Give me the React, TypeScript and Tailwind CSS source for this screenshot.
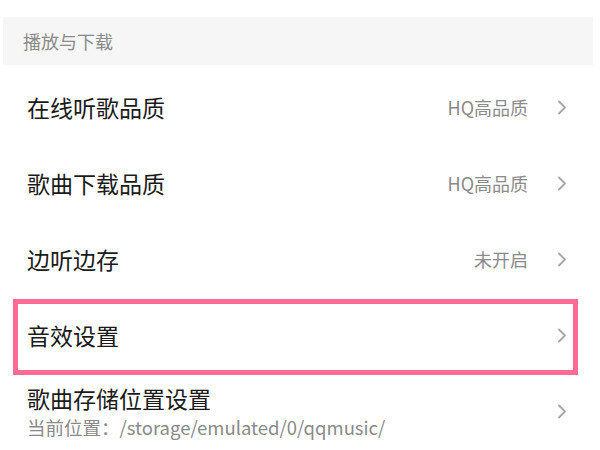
type Row = {
  title: string;
  value?: string;
  sub?: string;
  highlight?: boolean;
};

const rows: Row[] = [
  { title: "在线听歌品质", value: "HQ高品质" },
  { title: "歌曲下载品质", value: "HQ高品质" },
  { title: "边听边存", value: "未开启" },
  { title: "音效设置", highlight: true },
  { title: "歌曲存储位置设置", sub: "当前位置：/storage/emulated/0/qqmusic/" },
];

const font = { fontFamily: '"Noto Sans CJK SC", "Noto Sans", sans-serif' };

function Chevron() {
  return (
    <svg width="10" height="15" viewBox="0 0 10 15" fill="none" className="shrink-0">
      <path d="M2 1.5 L8 7.5 L2 13.5" stroke="#a6a6a6" strokeWidth="1.8" strokeLinecap="round" strokeLinejoin="round" />
    </svg>
  );
}

function SettingRow({ row }: { row: Row }) {
  return (
    <div className="relative flex h-[76px] items-center pl-[27px] pr-[33px]">
      <div className="flex-1 min-w-0">
        <div className="text-[23px] leading-[28px] text-[#1a1a1a]">{row.title}</div>
        {row.sub && (
          <div className="mt-[3px] text-[18.5px] leading-[24px] text-[#8a8a8a] whitespace-nowrap">
            {row.sub}
          </div>
        )}
      </div>
      {row.value && (
        <span className="mr-[29px] text-[18px] text-[#8a8a8a]">{row.value}</span>
      )}
      <Chevron />
      {row.highlight && (
        <div className="absolute left-[13px] right-[22px] top-[2px] h-[76px] border-[5px] border-[#ff6b93]" />
      )}
    </div>
  );
}

export default function App() {
  return (
    <div className="w-[600px] h-[450px] overflow-hidden bg-white" style={font}>
      <div className="h-[17px]" />
      <div className="h-[48px] ml-[3px] mr-[7px] bg-[#f6f6f6] flex items-center pl-[20px] text-[18px] text-[#8a8a8a]">
        播放与下载
      </div>
      <div className="pt-[4px]">
        {rows.map((row) => (
          <SettingRow key={row.title} row={row} />
        ))}
      </div>
    </div>
  );
}
